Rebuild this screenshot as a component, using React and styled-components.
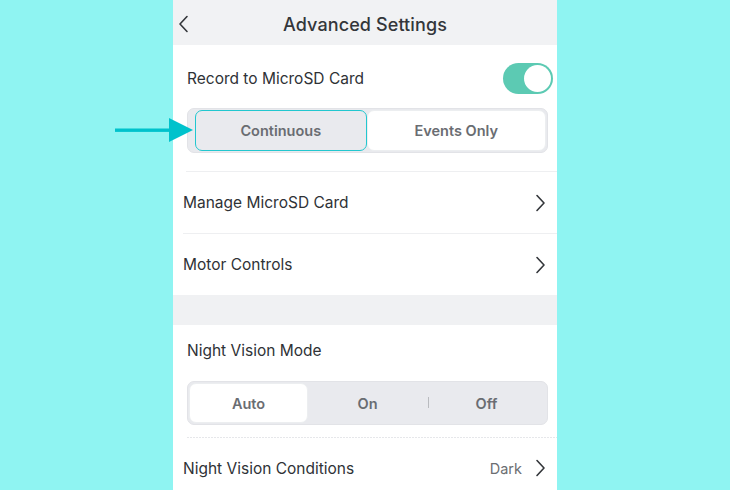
import React from "react";
import styled, { createGlobalStyle } from "styled-components";

const Global = createGlobalStyle`
  html, body {
    margin: 0;
    padding: 0;
    background: #8ff4f2;
  }
  body {
    font-family: Inter, "Noto Sans", sans-serif;
    color: #2f3236;
  }
`;

const Stage = styled.div`
  position: relative;
  width: 730px;
  height: 490px;
  overflow: hidden;
  display: flex;
  padding-left: 173px;
  box-sizing: border-box;
`;

const Phone = styled.div`
  width: 384px;
  height: 490px;
  background: #fff;
  display: flex;
  flex-direction: column;
  overflow: hidden;
  & > * {
    flex: none;
  }
`;

const Header = styled.div`
  height: 45px;
  background: #f1f2f4;
  display: grid;
  grid-template-columns: 40px 1fr 40px;
  align-items: center;
  padding-top: 3px;
  box-sizing: border-box;
`;

const BackButton = styled.div`
  display: flex;
  align-items: center;
  padding-left: 5px;
`;

const Title = styled.h1`
  margin: 0;
  text-align: center;
  font-size: 18px;
  font-weight: 500;
  color: #33363a;
  letter-spacing: 0.1px;
`;

const ToggleRow = styled.div`
  height: 63px;
  display: flex;
  align-items: center;
  justify-content: space-between;
  padding: 4px 4px 0 14px;
  box-sizing: border-box;
`;

const Label = styled.span`
  font-size: 15.5px;
  color: #2f3236;
`;

const Toggle = styled.div`
  width: 50px;
  height: 31px;
  border-radius: 16px;
  background: #5ccab3;
  display: flex;
  align-items: center;
  justify-content: ${(p) => (p.on ? "flex-end" : "flex-start")};
  padding: 2px;
  box-sizing: border-box;
`;

const Knob = styled.div`
  width: 27px;
  height: 27px;
  border-radius: 50%;
  background: #fff;
`;

const Segmented = styled.div`
  margin: ${(p) => p.margin || "0 9px 0 14px"};
  height: ${(p) => p.height}px;
  background: #e9eaee;
  border: 1px solid #e2e3e7;
  border-radius: 7px;
  display: flex;
  align-items: stretch;
  padding: 1px;
  box-sizing: border-box;
`;

const Option = styled.div`
  flex: ${(p) => p.grow || 1} 1 0;
  display: flex;
  align-items: center;
  justify-content: center;
  position: relative;
  font-size: 14.5px;
  font-weight: 600;
  color: #6a6d72;
  border-radius: 7px;
  background: ${(p) => (p.active ? "#fff" : "transparent")};
  border: 1px solid ${(p) => (p.highlight ? "#22c7cf" : p.active ? "#eceef0" : "transparent")};
  margin-left: ${(p) => p.offset || 0}px;
`;

const Sep = styled.span`
  position: absolute;
  left: 0;
  top: 50%;
  width: 1px;
  height: 11px;
  margin-top: -6px;
  background: #b9bbbf;
`;

const Spacer = styled.div`
  height: ${(p) => p.h}px;
`;

const Divider = styled.div`
  height: 1px;
  margin-left: ${(p) => p.inset}px;
  background: ${(p) =>
    p.dotted
      ? "repeating-linear-gradient(90deg, #e6e7ea 0 2px, transparent 2px 3px)"
      : "#eeeff1"};
`;

const NavRow = styled.div`
  height: ${(p) => p.height || 61}px;
  display: flex;
  align-items: center;
  justify-content: space-between;
  padding: 0 11px 0 10px;
`;

const RowEnd = styled.div`
  display: flex;
  align-items: center;
  gap: 13px;
`;

const Value = styled.span`
  font-size: 14.5px;
  color: #6b6e72;
`;

const Band = styled.div`
  height: 30px;
  background: #f0f1f3;
`;

const SectionLabel = styled.div`
  height: 50px;
  display: flex;
  align-items: center;
  padding-left: 14px;
`;

const Arrow = styled.svg`
  position: absolute;
  left: 114px;
  top: 117px;
`;

const Chevron = ({ left }) => (
  <svg width="11" height="18" viewBox="0 0 11 18" fill="none">
    <path
      d={left ? "M9 1.5 L2 9 L9 16.5" : "M2 1.5 L9 9 L2 16.5"}
      stroke="#33363a"
      strokeWidth="1.6"
      strokeLinecap="round"
      strokeLinejoin="round"
    />
  </svg>
);

export default function App() {
  return (
    <>
      <Global />
      <Stage>
        <Phone>
          <Header>
            <BackButton>
              <Chevron left />
            </BackButton>
            <Title>Advanced Settings</Title>
            <div />
          </Header>

          <ToggleRow>
            <Label>Record to MicroSD Card</Label>
            <Toggle on>
              <Knob />
            </Toggle>
          </ToggleRow>
          <Segmented height={45}>
            <Option highlight offset={6} grow={170}>
              Continuous
            </Option>
            <Option active grow={178}>
              Events Only
            </Option>
          </Segmented>
          <Spacer h={18} />
          <Divider inset={13} />

          <NavRow>
            <Label>Manage MicroSD Card</Label>
            <Chevron />
          </NavRow>
          <Divider inset={10} />
          <NavRow>
            <Label>Motor Controls</Label>
            <Chevron />
          </NavRow>

          <Band />

          <SectionLabel>
            <Label>Night Vision Mode</Label>
          </SectionLabel>
          <Segmented height={44} margin="6px 9px 0 14px">
            <Option active>Auto</Option>
            <Option>On</Option>
            <Option>
              <Sep />
              Off
            </Option>
          </Segmented>
          <Spacer h={12} />
          <Divider inset={14} dotted />

          <NavRow height={60}>
            <Label>Night Vision Conditions</Label>
            <RowEnd>
              <Value>Dark</Value>
              <Chevron />
            </RowEnd>
          </NavRow>
        </Phone>

        <Arrow width="82" height="26" viewBox="0 0 82 26">
          <rect x="1" y="11.5" width="58" height="3.4" fill="#00c2cc" />
          <path d="M55 1 L79 13 L55 25 Z" fill="#00c2cc" />
        </Arrow>
      </Stage>
    </>
  );
}
